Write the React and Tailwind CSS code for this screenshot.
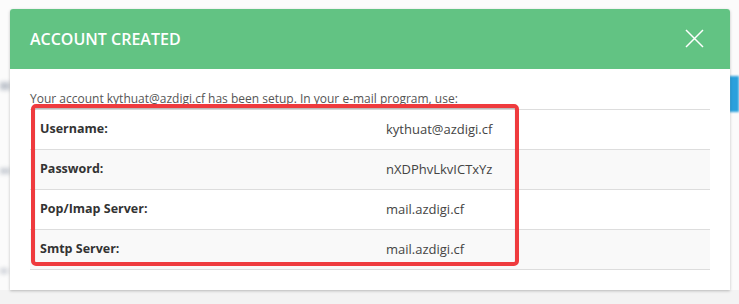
import React from "react";

const rows = [
  { label: "Username:", value: "kythuat@azdigi.cf" },
  { label: "Password:", value: "nXDPhvLkvICTxYz" },
  { label: "Pop/Imap Server:", value: "mail.azdigi.cf" },
  { label: "Smtp Server:", value: "mail.azdigi.cf" },
];

const App = () => {
  return (
    <div
      className="relative w-[739px] h-[304px] overflow-hidden bg-[#fbfbfb]"
      style={{ fontFamily: '"Open Sans", "Liberation Sans", sans-serif' }}
    >
      {/* blurred page behind the modal */}
      <div className="absolute left-0 top-[82px] w-[10px] h-[8px] bg-gray-400/60 blur-[2px]" />
      <div className="absolute left-0 top-[168px] w-[10px] h-[6px] bg-gray-400/50 blur-[2px]" />
      <div className="absolute left-0 top-[268px] w-[8px] h-[6px] bg-gray-400/40 blur-[2px]" />
      <div className="absolute right-0 top-[76px] w-[10px] h-[36px] bg-[#2aa0dc] blur-[1px]" />
      <div className="absolute left-0 right-0 bottom-0 h-[14px] bg-[#f3f3f3]" />

      {/* modal */}
      <div className="relative ml-[10px] mt-[9px] w-[720px] h-[281px] bg-white rounded-t-[3px] shadow-[0_1px_3px_rgba(0,0,0,0.25)] overflow-hidden">
        <div className="h-[60px] bg-[#62c383] flex items-center justify-between pl-[20px] pr-[26px]">
          <h2 className="text-white text-[16px] font-semibold">ACCOUNT CREATED</h2>
          <svg width="19" height="19" viewBox="0 0 19 19" className="mt-[-2px]">
            <path d="M1 1L18 18M18 1L1 18" stroke="white" strokeWidth="1.5" fill="none" />
          </svg>
        </div>

        <div className="px-[20px] pt-[20px]">
          <p className="text-[12px] leading-[20px] text-[#555]">
            Your account kythuat@azdigi.cf has been setup. In your e-mail program, use:
          </p>
          <div className="relative">
            <table className="w-full border-collapse text-[13px] text-[#333]">
              <tbody>
                {rows.map((row, index) => (
                  <tr
                    key={index}
                    className={`h-[40px] border-t border-b border-[#dddddd] ${index % 2 === 1 ? "bg-[#f9f9f9]" : "bg-white"}`}
                  >
                    <td className="pl-[10px] w-[356px] font-bold text-[12.5px]">{row.label}</td>
                    <td className="text-[#444]">{row.value}</td>
                  </tr>
                ))}
              </tbody>
            </table>
            {/* annotation box */}
            <div className="absolute left-[1px] top-[-5px] w-[488px] h-[162px] border-[4px] border-[#ef3b3e] rounded-[5px] shadow-[inset_0_1px_1px_rgba(0,0,0,0.3)]" />
          </div>
        </div>
      </div>
    </div>
  );
};

export default App;
